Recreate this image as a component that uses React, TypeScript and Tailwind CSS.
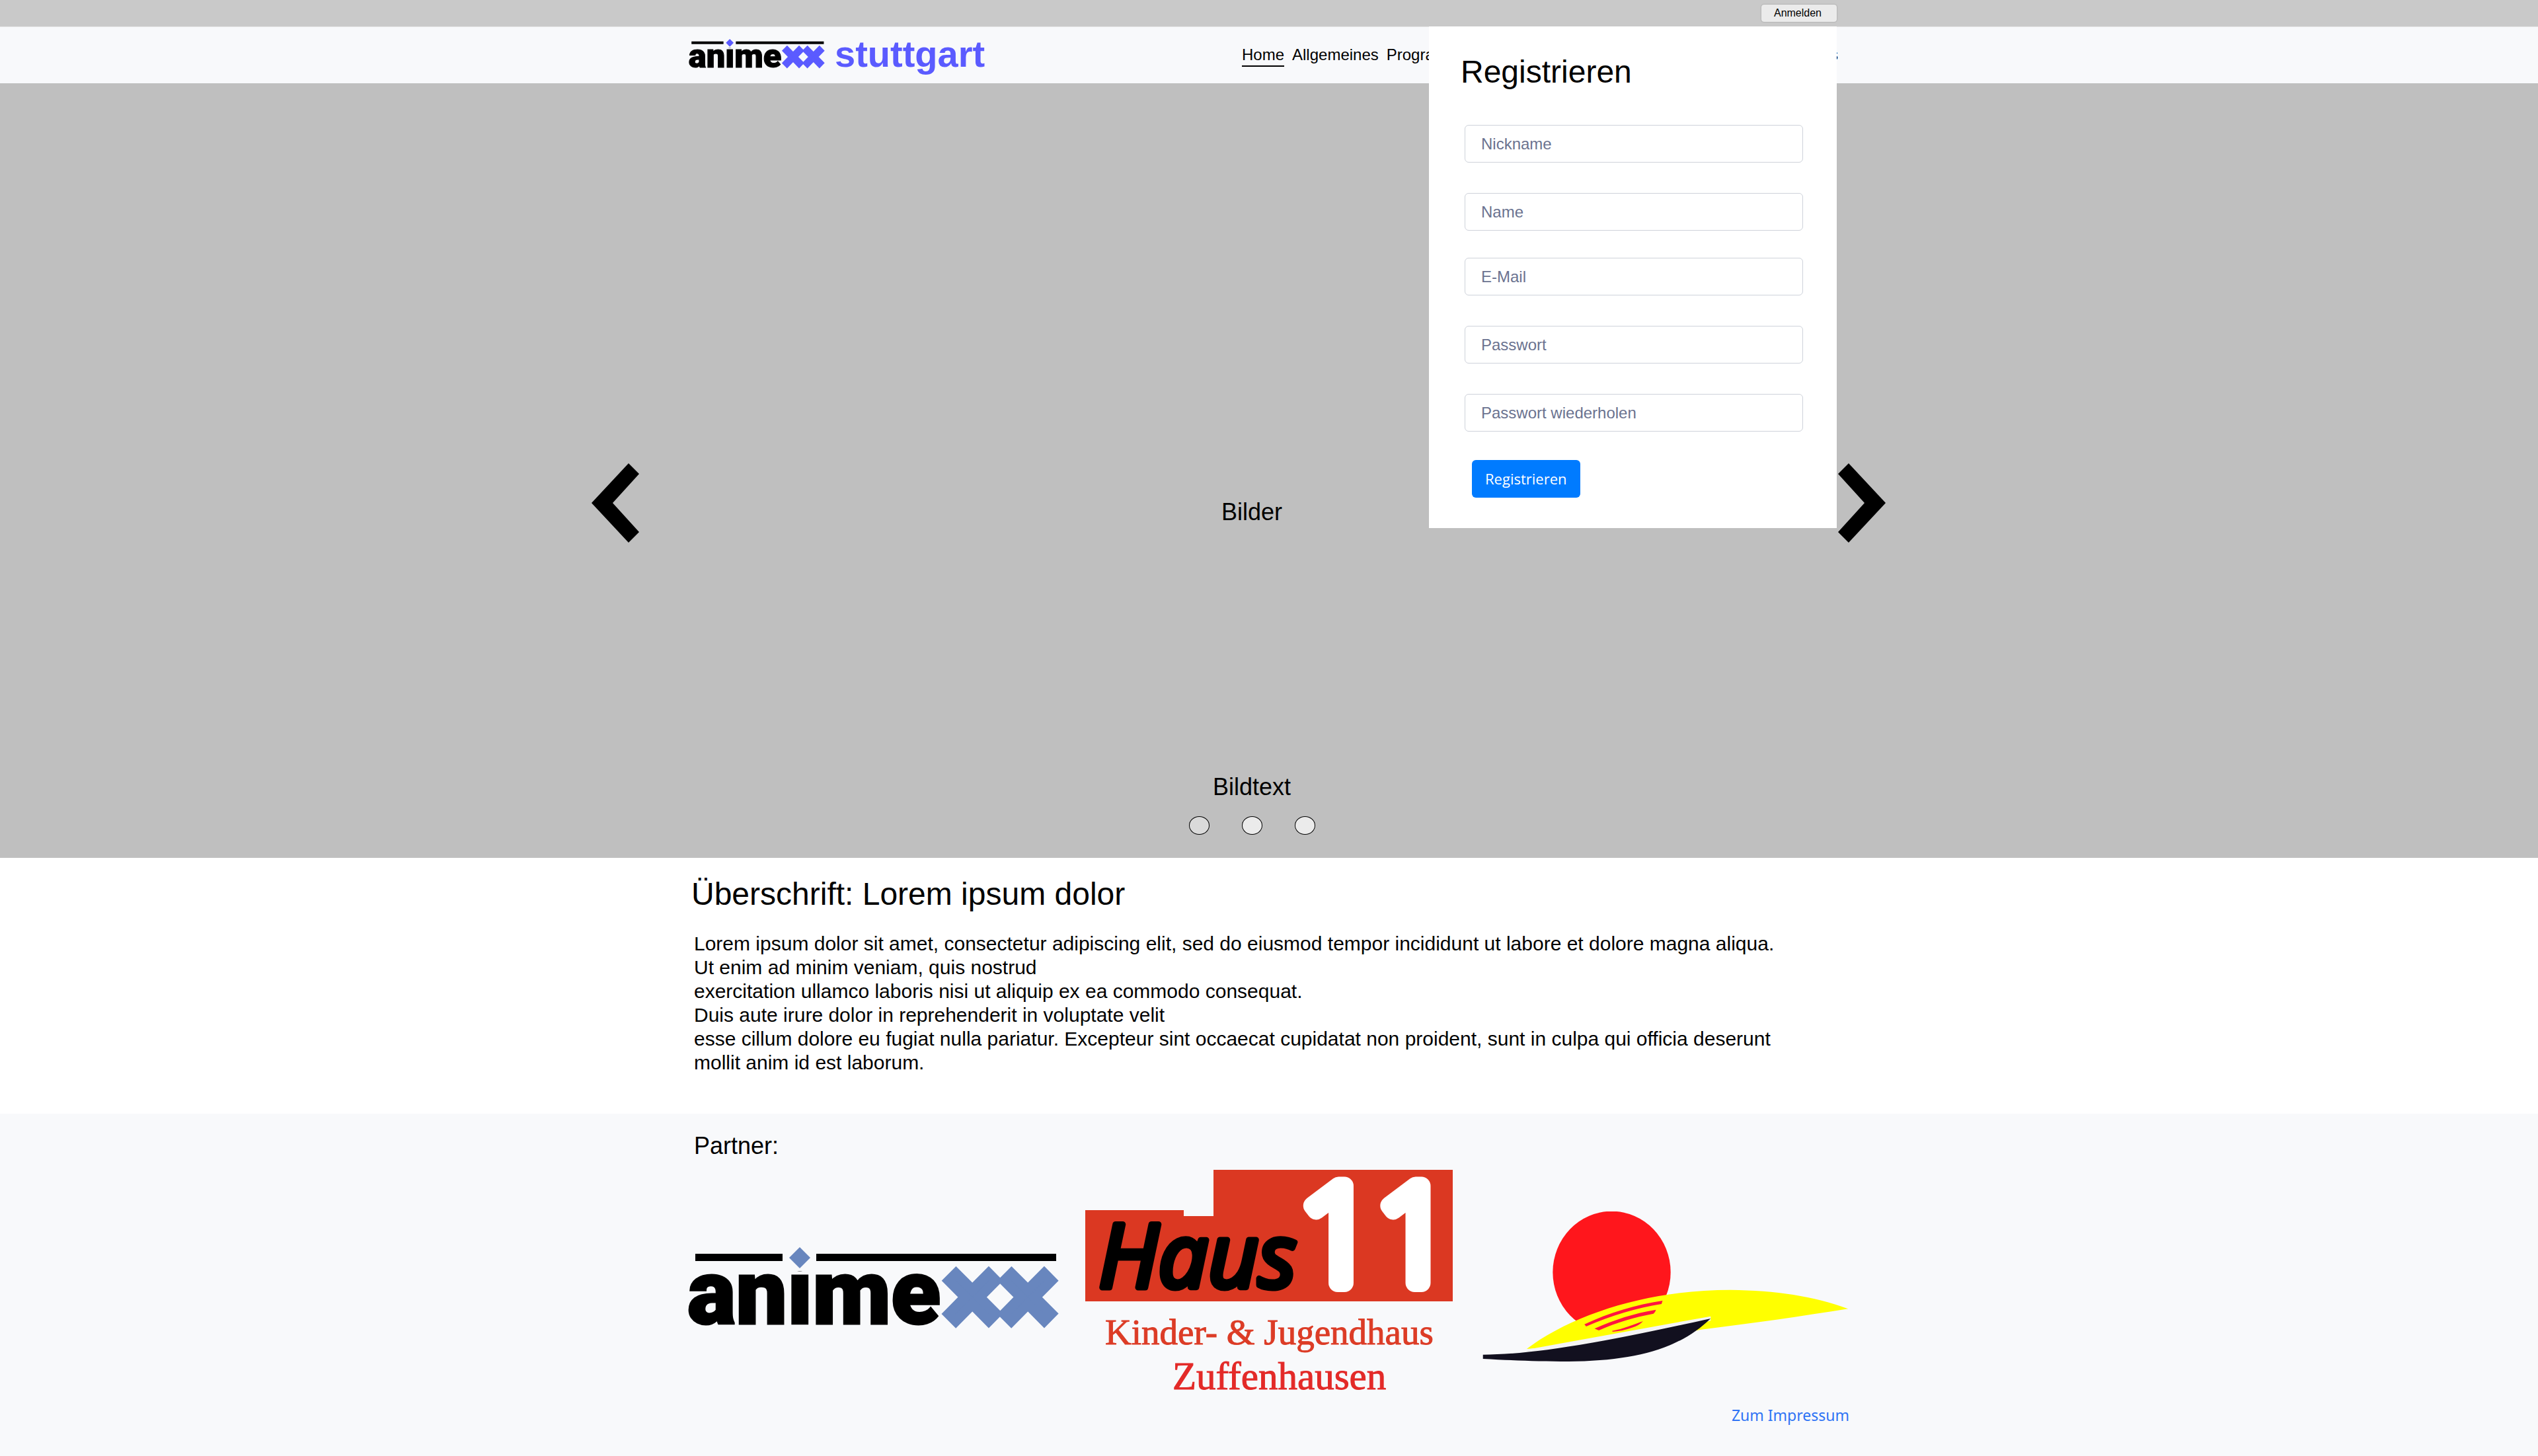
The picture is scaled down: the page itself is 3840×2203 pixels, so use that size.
import React from "react";

const ARIAL = "font-['Liberation_Sans',Arial,sans-serif]";

const navItems = ["Home", "Allgemeines", "Programm"];

const accountFields = [
  { id: "nickname", label: "Nickname", type: "text" },
  { id: "name", label: "Name", type: "text" },
];

const loginFields = [
  { id: "email", label: "E-Mail", type: "email" },
  { id: "password", label: "Passwort", type: "password" },
  { id: "password-repeat", label: "Passwort wiederholen", type: "password" },
];

function AnimexxLogo({ accent, className }: { accent: string; className: string }) {
  return (
    <svg viewBox="0 0 556 120" className={`overflow-visible ${className}`} role="img" aria-label="animexx">
      <text
        x="-2"
        y="116"
        fontFamily="Roboto, sans-serif"
        fontWeight="900"
        fontSize="138"
        fill="#000"
        stroke="#000"
        strokeWidth="3"
      >
        anime
      </text>
      <rect x="136" y="0" width="60" height="36" fill="#f8f9fb" />
      <rect x="10" y="10" width="132" height="11" fill="#000" />
      <rect x="193" y="10" width="363" height="11" fill="#000" />
      <path d="M168 0 184 16 168 32 152 16Z" fill={accent} />
      <text
        x="387"
        y="124"
        fontFamily="'Liberation Sans', sans-serif"
        fontWeight="700"
        fontSize="144"
        fill={accent}
        stroke={accent}
        strokeWidth="15"
      >
        ××
      </text>
    </svg>
  );
}

function HausLogo() {
  return (
    <svg
      viewBox="0 0 556 354"
      className="w-full overflow-visible"
      role="img"
      aria-label="Haus 11, Kinder- & Jugendhaus Zuffenhausen"
    >
      <path d="M0 61H149V70H194V0H556V199H0Z" fill="#db3822" />
      <text
        x="20"
        y="178"
        fontFamily="'Open Sans', sans-serif"
        fontStyle="italic"
        fontSize="133"
        fill="#000"
        stroke="#000"
        strokeWidth="9"
        strokeLinejoin="round"
      >
        Haus
      </text>
      <text
        x="324"
        y="171"
        fontFamily="'Open Sans', sans-serif"
        fontWeight="300"
        fontSize="204"
        fill="#fff"
        stroke="#fff"
        strokeWidth="28"
        strokeLinejoin="round"
      >
        11
      </text>
      <text x="30" y="264" fontFamily="'Liberation Serif', serif" fontSize="55" fill="#dc3c26" stroke="#dc3c26">
        Kinder- &amp; Jugendhaus
      </text>
      <text x="132" y="332" fontFamily="'Liberation Serif', serif" fontSize="59" fill="#e32a28" stroke="#e32a28">
        Zuffenhausen
      </text>
    </svg>
  );
}

function SunLogo() {
  return (
    <svg viewBox="0 0 556 228" className="w-full" role="img" aria-label="Sonne über Welle">
      <g transform="translate(-22 -32) scale(.3827 .3333)">
        <ellipse cx="571" cy="372" rx="233" ry="277" fill="#ff161c" />
        <path d="M235 720C420 560 720 452 1040 452C1220 454 1370 480 1506 538C1320 572 1130 604 925 632L700 680Z" fill="#ff0" />
        <path d="M235 738L240 722L962 572L962 592L700 670Z" fill="#f4f4f4" />
        <path
          d="M62 746C260 745 520 695 962 582C840 720 660 775 400 777C280 777 180 772 62 765Z"
          fill="#12101f"
        />
        <path d="M463 608C560 556 670 518 772 501L768 516C670 534 570 568 470 618Z" fill="#ff1440" />
        <path d="M503 628C580 588 660 558 746 542Q744 552 736 560C660 576 590 600 520 636Z" fill="#ff1440" />
        <path d="M572 638C620 628 660 608 695 594Q680 614 650 624Q610 640 575 642Z" fill="#ff1440" />
      </g>
    </svg>
  );
}

function Chevron({ direction }: { direction: "left" | "right" }) {
  return (
    <svg viewBox="0 0 72 120" className="h-[120px] w-[72px]" aria-hidden="true">
      <path d={direction === "left" ? "M0 60 56 0 72 16 32 60 72 104 56 120Z" : "M72 60 16 0 0 16 40 60 0 104 16 120Z"} />
    </svg>
  );
}

function Field({ id, label, type }: { id: string; label: string; type: string }) {
  return (
    <input
      id={id}
      type={type}
      aria-label={label}
      placeholder={label}
      className="h-[57px] w-full rounded-md border border-[#ced2da] bg-white px-6 text-[24px] placeholder:text-[#6b7390]"
    />
  );
}

function RegisterPanel() {
  return (
    <form className="absolute top-full right-[19px] z-10 w-[617px] bg-white pt-[41px] pr-[51px] pb-[46px] pl-12">
      <h2 className="text-[48px] leading-[56px]">Registrieren</h2>
      <div className="mt-[52px] ml-[6px] flex flex-col gap-[46px]">
        {accountFields.map((f) => (
          <Field key={f.id} {...f} />
        ))}
      </div>
      <div className="mt-[41px] ml-[6px] flex flex-col gap-[46px]">
        {loginFields.map((f) => (
          <Field key={f.id} {...f} />
        ))}
      </div>
      <button
        type="button"
        className="mt-[43px] ml-[17px] block h-[57px] rounded-md bg-[#007bff] px-5 font-['Open_Sans',sans-serif] text-[22px] text-white"
      >
        Registrieren
      </button>
    </form>
  );
}

export default function App() {
  return (
    <div className={`flex min-h-screen flex-col bg-white text-black ${ARIAL}`}>
      <div className="bg-[#c9c9c9]">
        <div className="relative mx-auto flex h-10 max-w-[1756px] items-center justify-end pr-[19px]">
          <button
            type="button"
            className="h-[26px] w-[114px] rounded bg-[#ebebeb] pr-1 text-[16px] shadow-[0_0_2px_rgba(0,0,0,0.3)]"
          >
            Anmelden
          </button>
          <RegisterPanel />
        </div>
      </div>

      <header className="border-t border-[#e6e6e6] bg-[#f8f9fb]">
        <div className="mx-auto flex h-[85px] w-full max-w-[1756px] items-start justify-between">
          <a href="#home" className="flex items-start gap-4 pt-[18px] text-[56px] leading-[46px] font-bold text-[#5b5bff]">
            <AnimexxLogo accent="#5b5bff" className="h-[44px] w-[205px]" />
            <span>stuttgart</span>
          </a>
          <nav className="mr-[17px] flex w-[902px] gap-3 pt-[26px] text-[24px] leading-[32px]">
            {navItems.map((item, i) => (
              <a key={item} href={`#${item}`} className={i === 0 ? "border-b-2 border-black" : ""}>
                {item}
              </a>
            ))}
            <a href="#News" className="ml-auto">
              News
            </a>
          </nav>
        </div>
      </header>

      <section className="flex min-h-[1172px] flex-col bg-[#bfbfbf] pt-[575px] pr-[25.7%] pb-[35px] pl-[23.3%] text-[36px] leading-[40px]">
        <div className="flex items-center justify-between">
          <button type="button" aria-label="Vorheriges Bild">
            <Chevron direction="left" />
          </button>
          <p className="pt-7 pl-10">Bilder</p>
          <button type="button" aria-label="Nächstes Bild">
            <Chevron direction="right" />
          </button>
        </div>
        <p className="mt-auto pl-10 text-center">Bildtext</p>
        <div className="mt-6 flex justify-center gap-[49px] pl-[42px]">
          <button type="button" aria-label="Bild 1" className="h-7 w-[31px] rounded-[50%] border border-black bg-[#dadada]" />
          <button type="button" aria-label="Bild 2" className="h-7 w-[31px] rounded-[50%] border border-black bg-[#ebebeb]" />
          <button type="button" aria-label="Bild 3" className="h-7 w-[31px] rounded-[50%] border border-black bg-[#ebebeb]" />
        </div>
      </section>

      <main className="mx-auto w-full max-w-[1756px] pt-[27px] pb-[59px]">
        <h1 className="pl-1 text-[48px] leading-[56px]">Überschrift: Lorem ipsum dolor</h1>
        <p className="mt-[29px] px-2 text-[30px] leading-[36px]">
          Lorem ipsum dolor sit amet, consectetur adipiscing elit, sed do eiusmod tempor incididunt ut labore et dolore magna aliqua.
          <br />
          Ut enim ad minim veniam, quis nostrud
          <br />
          exercitation ullamco laboris nisi ut aliquip ex ea commodo consequat.
          <br />
          Duis aute irure dolor in reprehenderit in voluptate velit
          <br />
          esse cillum dolore eu fugiat nulla pariatur. Excepteur sint occaecat cupidatat non proident, sunt in culpa qui officia deserunt
          <br />
          mollit anim id est laborum.
        </p>
      </main>

      <footer className="grow bg-[#f8f9fb]">
        <div className="mx-auto max-w-[1756px] pt-[29px] pb-10">
          <h2 className="pl-2 text-[36px] leading-[40px]">Partner:</h2>
          <div className="mt-4 grid grid-cols-3 items-center gap-11">
            <AnimexxLogo accent="#6886be" className="w-full" />
            <HausLogo />
            <SunLogo />
          </div>
          <div className="flex justify-end">
            <a href="#impressum" className="font-['Noto_Sans',sans-serif] text-[23px] leading-[34px] text-[#2f74f5]">
              Zum Impressum
            </a>
          </div>
        </div>
      </footer>
    </div>
  );
}
